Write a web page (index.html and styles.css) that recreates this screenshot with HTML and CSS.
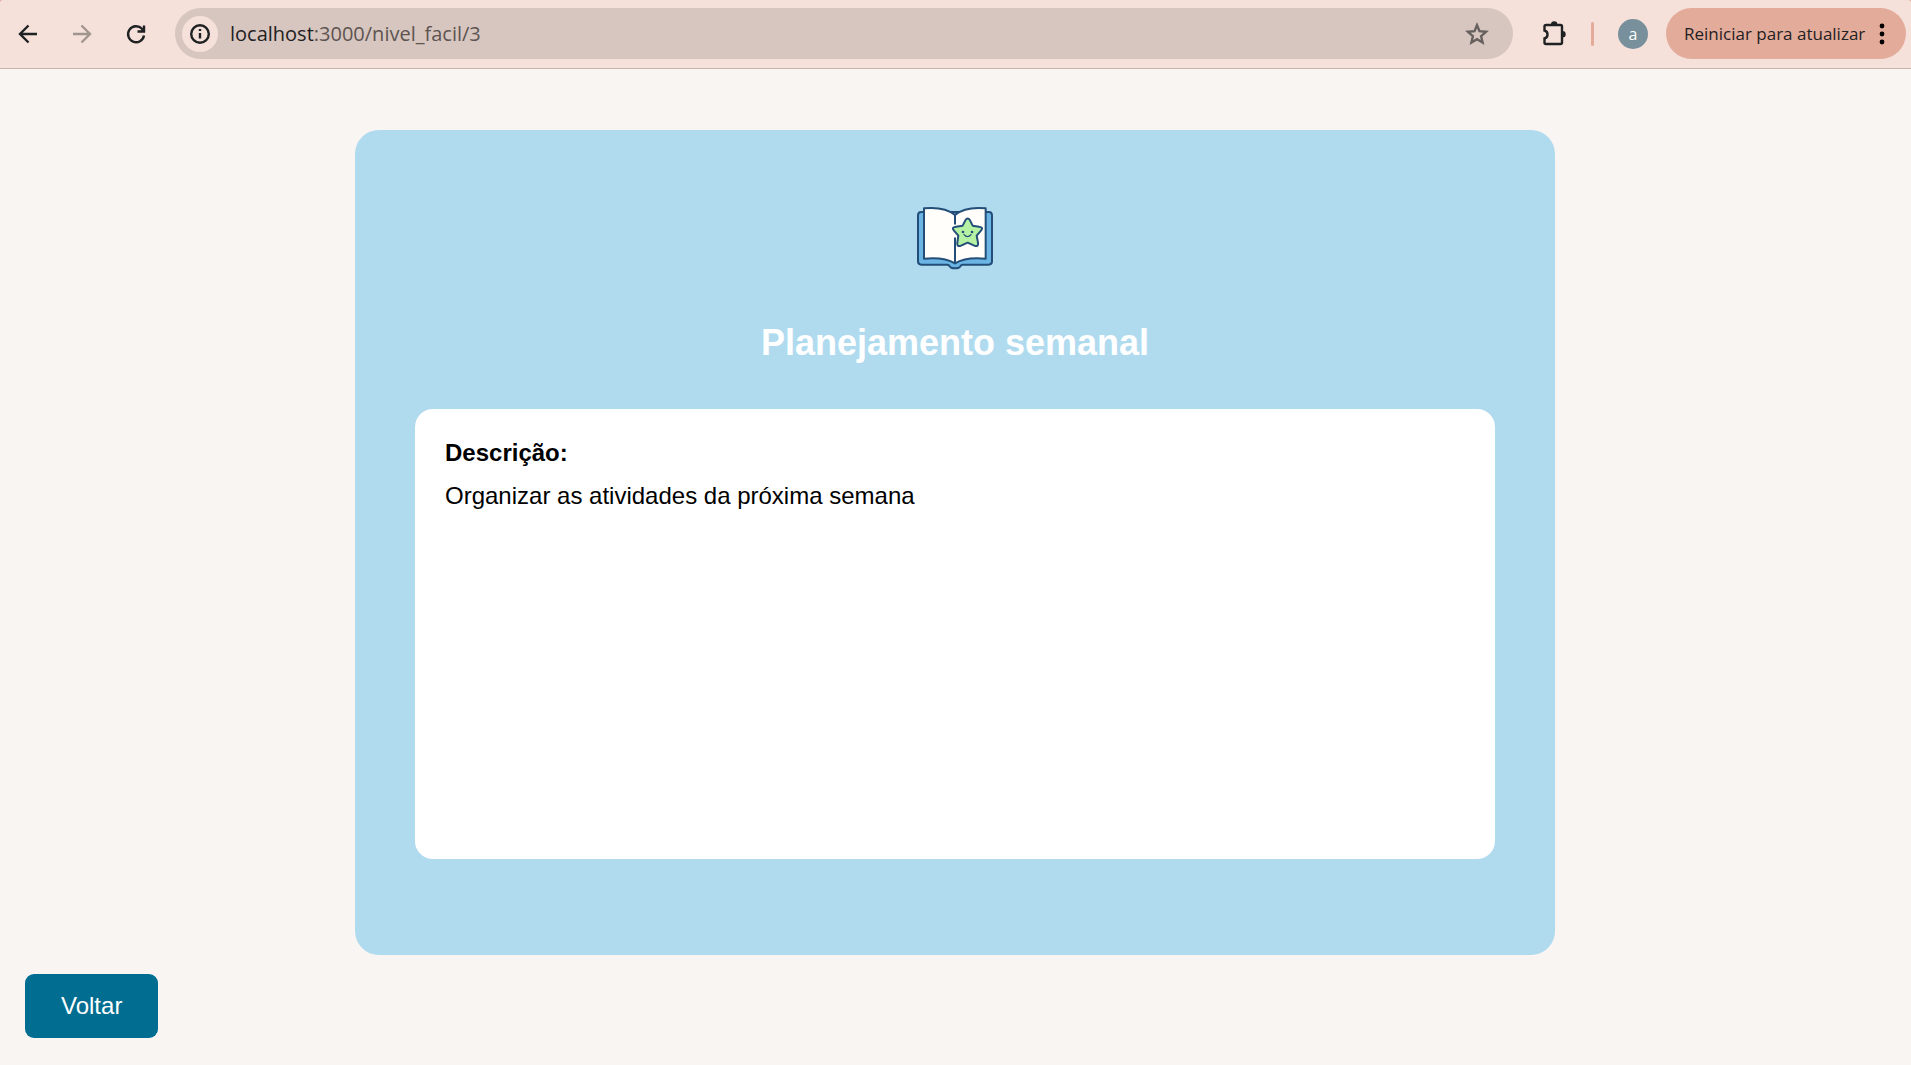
FILE: index.html
```
<!DOCTYPE html>
<html lang="pt-BR">
<head>
  <meta charset="utf-8">
  <meta name="viewport" content="width=device-width, initial-scale=1">
  <title>Planejamento semanal</title>
  <link rel="stylesheet" href="styles.css">
</head>
<body>
  <div class="browser">
    <header class="toolbar">
      <nav class="history" aria-label="Navegação">
        <button class="icon-button" type="button" aria-label="Voltar à página anterior">
          <svg width="24" height="24" viewBox="0 0 24 24"><path d="M21 12H4M12.500 3.500 4 12l8.500 8.500"/></svg>
        </button>
        <button class="icon-button icon-button--muted" type="button" aria-label="Avançar" disabled>
          <svg width="24" height="24" viewBox="0 0 24 24"><path d="M3 12h17M11.500 3.500 20 12l-8.500 8.500"/></svg>
        </button>
        <button class="icon-button" type="button" aria-label="Recarregar">
          <svg width="24" height="24" viewBox="0 0 24 24"><path d="M20 13.500A8 8 0 1 1 18 6.800L20 9"/><path d="M20 3.500V9.500H13.500"/><path d="M20.500 5v4.500H16z" fill="currentColor" stroke="none"/></svg>
        </button>
      </nav>
      <div class="address">
        <button class="site-info" type="button" aria-label="Informações do site">
          <svg width="22" height="22" viewBox="0 0 22 22"><circle cx="11" cy="11" r="8.800"/><path d="M11 10v5.500M11 6v2"/></svg>
        </button>
        <label class="host" for="url">localhost</label>
        <input class="url" id="url" type="text" value=":3000/nivel_facil/3" spellcheck="false">
        <button class="icon-button icon-button--star" type="button" aria-label="Adicionar aos favoritos">
          <svg width="24" height="24" viewBox="0 0 24 24"><path d="m12 3.200 2.500 6 6.600.600-5 4.400 1.500 6.400L12 17.200l-5.600 3.400 1.500-6.400-5-4.400 6.600-.600z"/></svg>
        </button>
      </div>
      <div class="tools">
        <button class="icon-button" type="button" aria-label="Extensões">
          <svg width="28" height="28" viewBox="0 0 28 28"><path d="M4.500 6.500Q4.500 5 6 5H20.500Q22 5 22 6.500V22.500Q22 24 20.500 24H6Q4.500 24 4.500 22.500V18.500C8.500 17.500 8.500 11.500 4.500 10.500Z"/><path d="M11 4.500a3.200 3.200 0 0 1 6.400 0zM22.500 11a3.200 3.200 0 0 1 0 6.400z" fill="currentColor" stroke="none"/></svg>
        </button>
        <span class="divider"></span>
        <button class="avatar" type="button">a</button>
        <button class="update" type="button">
          Reiniciar para atualizar
          <svg width="6" height="22" viewBox="0 0 6 22"><circle cx="3" cy="3" r="2.400"/><circle cx="3" cy="11" r="2.400"/><circle cx="3" cy="19" r="2.400"/></svg>
        </button>
      </div>
    </header>
  </div>
  <main class="page">
    <article class="card">
      <svg class="book" width="110" height="90" viewBox="0 0 330 270" aria-hidden="true">
        <path d="M64 66H266Q276 66 276 76V214Q276 224 266 224H189Q183 224 181 229Q178 235 165 235Q152 235 149 229Q147 224 141 224H64Q54 224 54 214V76Q54 66 64 66Z" fill="#6bb5e5"/>
        <path d="M72 55Q134 49 165 75Q196 49 257 55V206Q198 200 165 220Q132 200 72 206Z" fill="#fffefa"/>
        <path d="M165 75V101M165 145V220"/>
        <path d="M196 91Q203 80 210 91L218 107 237 110Q252 112 243 122L230 137 234 158Q236 172 223 167L203 158 183 167Q170 172 172 158L175 137 162 122Q153 112 168 110L188 107Z" fill="#b5f2a3"/>
        <g fill="#234e77" stroke="none"><circle cx="189" cy="126" r="4"/><circle cx="216" cy="126" r="4"/></g>
        <path d="M192 134Q203 146 213 134" stroke-width="4"/>
      </svg>
      <h1 class="title">Planejamento semanal</h1>
      <section class="description">
        <h2 class="description-label">Descrição:</h2>
        <p class="description-text">Organizar as atividades da próxima semana</p>
      </section>
    </article>
    <button class="back" type="button">Voltar</button>
  </main>
</body>
</html>
```
FILE: styles.css
```
* {
  box-sizing: border-box;
}

body {
  margin: 0;
  min-height: 100vh;
  background: #f9f5f2;
  color: #000;
  font-family: "Liberation Sans", Arial, sans-serif;
}

button,
input {
  margin: 0;
  padding: 0;
  border: 0;
  background: none;
  color: inherit;
  font: inherit;
}

svg {
  display: block;
  flex: none;
}

.browser {
  background: #e3ab9a;
}

.toolbar {
  display: flex;
  align-items: center;
  padding: 8px 5px 9px 16px;
  border-bottom: 1px solid #c9b3ad;
  border-radius: 3px 3px 0 0;
  background: #f5e1da;
  color: #1f2123;
  font-family: "Open Sans", "Noto Sans", sans-serif;
}

.history {
  display: flex;
  gap: 30px;
  margin-right: 27px;
}

.icon-button {
  color: #1f2123;
}

.icon-button svg,
.site-info svg {
  fill: none;
  stroke: currentColor;
  stroke-width: 2.4;
}

.icon-button--muted {
  color: #a1958f;
}

.icon-button--star {
  color: #66605e;
}

.address {
  display: flex;
  flex: 1;
  align-items: center;
  height: 51px;
  padding: 0 24px 0 7px;
  border-radius: 26px;
  background: #d7c6bf;
  font-size: 20px;
}

.site-info {
  display: grid;
  place-items: center;
  width: 36px;
  height: 36px;
  margin-right: 12px;
  border-radius: 50%;
  background: #f5e1da;
}

.url {
  flex: 1;
  min-width: 0;
  color: #5d5451;
}

.tools {
  display: flex;
  align-items: center;
  margin-left: 27px;
}

.divider {
  width: 3px;
  height: 24px;
  margin: 0 24px 0 23px;
  border-radius: 2px;
  background: #e3ab9a;
}

.avatar {
  width: 30px;
  height: 30px;
  border-radius: 50%;
  background: #78909c;
  color: #fff;
  font-size: 16px;
  line-height: 28px;
}

.update {
  display: flex;
  align-items: center;
  justify-content: space-between;
  width: 240px;
  height: 51px;
  margin-left: 18px;
  padding: 0 21px 0 18px;
  border-radius: 26px;
  background: #e3ab9a;
  font-size: 17px;
  white-space: nowrap;
}

.page {
  display: flex;
  flex-direction: column;
  align-items: flex-start;
  padding: 61px 26px 27px 25px;
}

.card {
  display: flex;
  flex-direction: column;
  align-items: center;
  align-self: center;
  width: 100%;
  max-width: 1200px;
  padding: 60px 60px 96px;
  border-radius: 24px;
  background: #b0dbef;
}

.book {
  fill: none;
  stroke: #234e77;
  stroke-width: 6;
  stroke-linecap: round;
  stroke-linejoin: round;
}

.title {
  margin: 41px 0 44px;
  color: #fff;
  font-size: 36px;
  line-height: 44px;
}

.description {
  width: 100%;
  min-height: 450px;
  padding: 30px;
  border-radius: 18px;
  background: #fff;
  font-size: 24px;
  line-height: 28px;
}

.description-label {
  margin: 0 0 15px;
  font-size: 24px;
}

.description-text {
  margin: 0;
}

.back {
  margin-top: 19px;
  padding: 18px 36px;
  border-radius: 9px;
  background: #006d91;
  color: #fff;
  font-size: 24px;
  line-height: 28px;
}
```
